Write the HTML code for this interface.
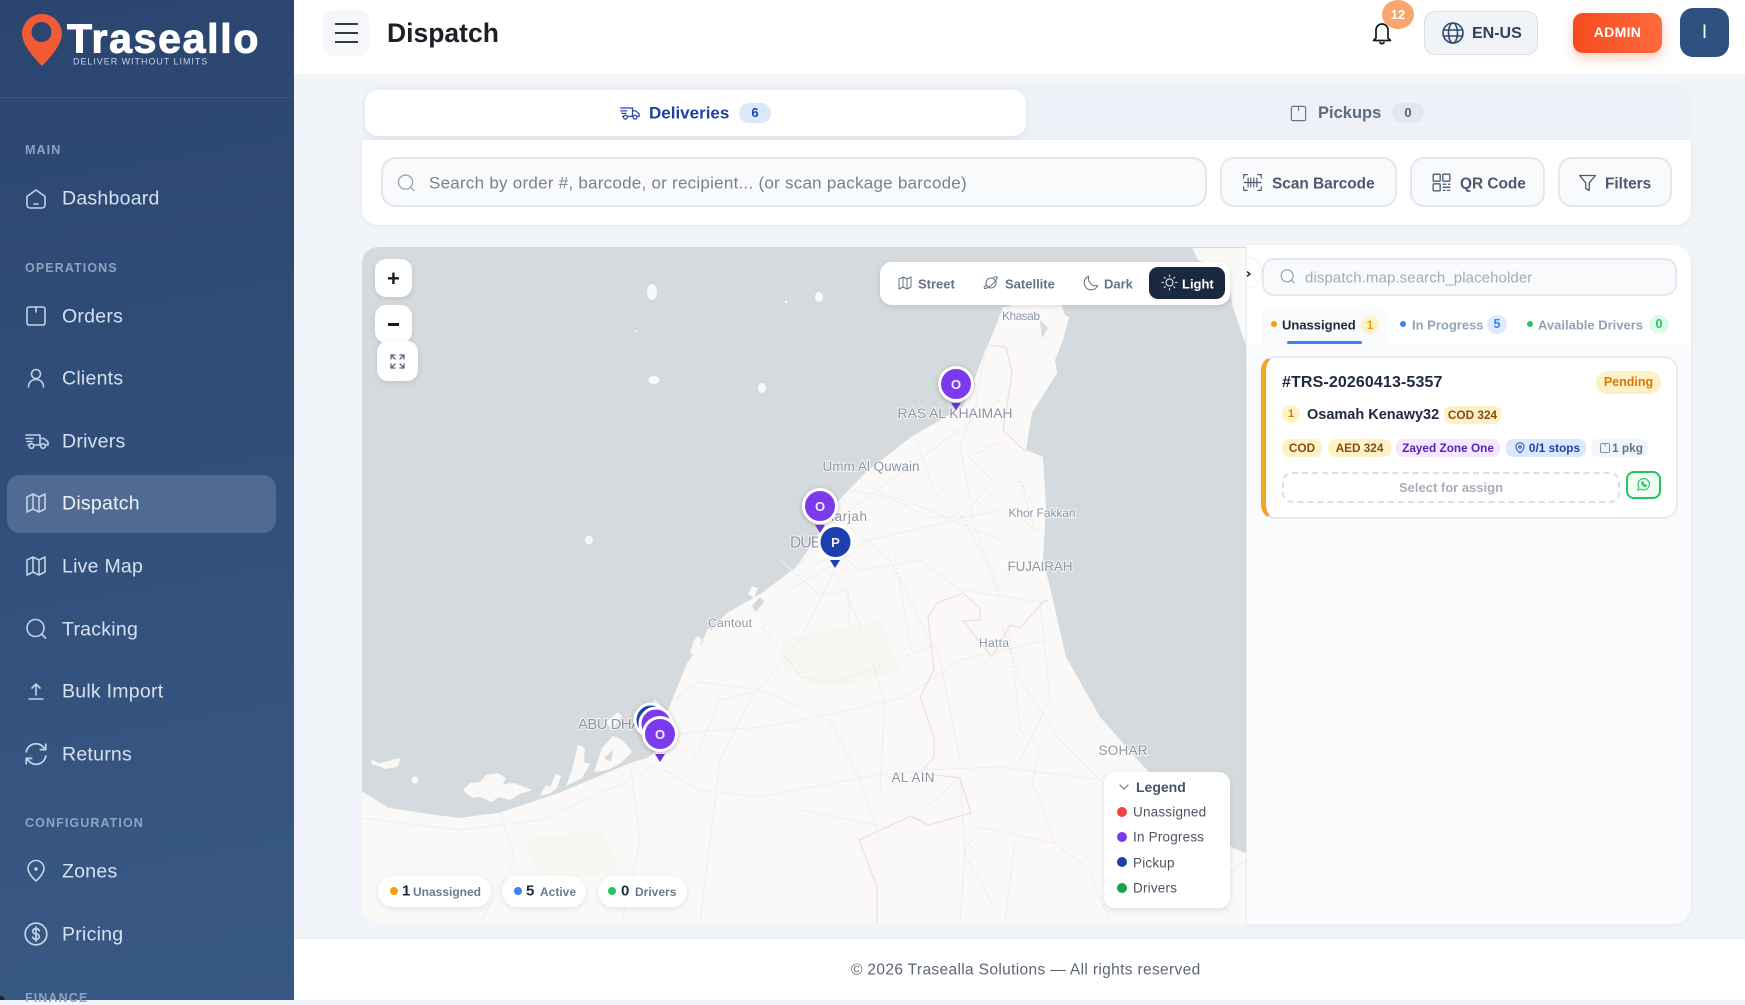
<!DOCTYPE html>
<html lang="en"><head><meta charset="utf-8"><title>Dispatch</title>
<style>
*{box-sizing:border-box}
html,body{margin:0;padding:0;width:1745px;height:1000px;overflow:hidden;background:#f1f4f9;font-family:"Liberation Sans",sans-serif}
.a{position:absolute;white-space:nowrap;line-height:1;transform:translateY(-50%)}
.b{position:absolute}
svg.i{position:absolute;fill:none;stroke:currentColor;stroke-width:1.6;stroke-linecap:round;stroke-linejoin:round}
.s{left:62px;font-size:19.5px;color:#d6e0ee;letter-spacing:.25px}
.h{left:25px;font-size:12.5px;font-weight:700;color:#8fa3c1;letter-spacing:1.1px}
.si{color:#c3d1e5;width:24px;height:24px;left:24px}
.btn{position:absolute;background:#f8fafc;border:2px solid #e2e8f0;border-radius:14px;top:157px;height:50px}
.bt{font-size:15.4px;font-weight:700;color:#4b5a6e;top:184px}
.pill{position:absolute;border-radius:7px;height:18px;top:439px;font-size:11.8px;font-weight:700;line-height:18px;text-align:center}
.mc{position:absolute;background:#fff;border-radius:11px;box-shadow:0 2px 6px rgba(30,41,59,.12)}
.st{position:absolute;background:#fff;border-radius:16px;top:876px;height:31px;box-shadow:0 2px 6px rgba(30,41,59,.1)}
.lt{font-size:13px;font-weight:700;color:#64748b;top:284px}
.lg{left:1134px;font-size:13.5px;color:#4b5563;letter-spacing:.2px}
.ld{position:absolute;left:1117px;width:10px;height:10px;border-radius:50%}
</style></head><body>

<!-- sidebar -->
<div class="b" style="left:0;top:0;width:294px;height:1000px;background:linear-gradient(170deg,#2a4570,#395985)"></div>
<div class="b" style="left:0;top:97px;width:294px;height:1px;background:#3a5580"></div>
<svg class="b" style="left:0;top:0" width="80" height="80"><path fill-rule="evenodd" fill="#f05a35" d="M42 14C31 14 22 23 22 34C22 47 42 66 42 66C42 66 62 47 62 34C62 23 53 14 42 14ZM41.500 22a10 10 0 1 1 0 20a10 10 0 1 1 0-20Z"/></svg>
<div class="a" style="left:67px;top:39px;font-size:41px;font-weight:700;color:#fff;letter-spacing:1.7px;-webkit-text-stroke:1px #fff">Traseallo</div>
<div class="a" style="left:73px;top:62px;font-size:9px;color:#c4d2e6;letter-spacing:.95px">DELIVER WITHOUT LIMITS</div>

<div class="a h" style="top:150px">MAIN</div>
<div class="a h" style="top:268px">OPERATIONS</div>
<div class="a h" style="top:823px">CONFIGURATION</div>
<div class="a h" style="top:998px">FINANCE</div>
<div class="b" style="left:7px;top:475px;width:269px;height:58px;border-radius:13px;background:#4f6b92"></div>

<div class="a s" style="top:199px">Dashboard</div>
<div class="a s" style="top:317px">Orders</div>
<div class="a s" style="top:379px">Clients</div>
<div class="a s" style="top:442px">Drivers</div>
<div class="a s" style="top:504px;color:#eef3fa">Dispatch</div>
<div class="a s" style="top:567px">Live Map</div>
<div class="a s" style="top:630px">Tracking</div>
<div class="a s" style="top:692px">Bulk Import</div>
<div class="a s" style="top:755px">Returns</div>
<div class="a s" style="top:872px">Zones</div>
<div class="a s" style="top:935px">Pricing</div>

<svg class="i si" style="top:187px" viewBox="0 0 24 24"><path d="M3 9.500L12 3l9 6.500V18a3 3 0 0 1-3 3H6a3 3 0 0 1-3-3zM10 17h4"/></svg>
<svg class="i si" style="top:304px" viewBox="0 0 24 24"><rect x="3" y="3" width="18" height="18" rx="2"/><path d="M12 3v5"/></svg>
<svg class="i si" style="top:366px" viewBox="0 0 24 24"><circle cx="12" cy="8" r="4.500"/><path d="M4.500 21c0-4.500 3-7.500 7.500-7.500s7.500 3 7.500 7.500"/></svg>
<svg class="i si" style="top:429px;left:25px" viewBox="0 0 24 24"><path d="M1 6h14v10H9M15 9.500h4l4 3.500v3h-2M1 9.500h7M2 12.500h5M3 16h1M13 16h2"/><circle cx="6.500" cy="17" r="2.300"/><circle cx="18" cy="17" r="2.300"/></svg>
<svg class="i si" style="top:491px" viewBox="0 0 24 24"><path d="M3 6l6-3 6 3 6-3v15l-6 3-6-3-6 3zM9 3v15M15 6v15"/></svg>
<svg class="i si" style="top:554px" viewBox="0 0 24 24"><path d="M3 6l6-3 6 3 6-3v15l-6 3-6-3-6 3zM9 3v15M15 6v15"/></svg>
<svg class="i si" style="top:617px" viewBox="0 0 24 24"><circle cx="11.500" cy="11" r="8.500"/><path d="M18 17.500l3.500 3.500"/></svg>
<svg class="i si" style="top:679px" viewBox="0 0 24 24"><path d="M12 16V5M8 9l4-4 4 4M5 20h14"/></svg>
<svg class="i si" style="top:741px;left:23px;width:26px;height:26px" viewBox="0 0 24 24"><path d="M3 10a9 9 0 0 1 16-4l2 2M21 3v5h-5M21 14a9 9 0 0 1-16 4l-2-2M3 21v-5h5"/></svg>
<svg class="i si" style="top:859px" viewBox="0 0 24 24"><path d="M12 22s-8-7-8-12.500a8 8 0 0 1 16 0C20 15 12 22 12 22z"/><circle cx="12" cy="10" r="1" fill="currentColor"/></svg>
<svg class="i si" style="top:921px;left:23px;width:26px;height:26px" viewBox="0 0 24 24"><circle cx="12" cy="12" r="10"/><path d="M15 9c-.5-1.200-1.600-2-3-2-1.700 0-3 1-3 2.500S10.300 12 12 12s3 1 3 2.500-1.300 2.500-3 2.500c-1.400 0-2.500-.8-3-2M12 5.500v13"/></svg>
<div class="b" style="left:0;top:996px;width:10px;height:4px;background:radial-gradient(circle at 0 100%,#222 0 4px,transparent 5px)"></div>

<!-- header -->
<div class="b" style="left:294px;top:0;width:1451px;height:74px;background:#fff"></div>
<div class="b" style="left:323px;top:10px;width:46px;height:46px;border-radius:11px;background:#f5f7fa"></div>
<div class="b" style="left:335px;top:23px;width:23px;height:2px;background:#333a45"></div>
<div class="b" style="left:335px;top:32px;width:23px;height:2px;background:#333a45"></div>
<div class="b" style="left:335px;top:41px;width:23px;height:2px;background:#333a45"></div>
<div class="a" style="left:387px;top:33px;font-size:26.500px;font-weight:700;color:#1c1f26">Dispatch</div>
<svg class="i" style="left:1370px;top:20px;color:#15181e;stroke-width:1.7" width="24" height="26" viewBox="0 0 24 26"><path d="M6 18V10a6 6 0 0 1 12 0v8l2.500 2.500h-17zM10 22.500c.5 1.500 3.500 1.500 4 0"/></svg>
<div class="b" style="left:1382px;top:0;width:32px;height:29px;border-radius:50%;background:#f9a56f;color:#fff;font-size:13px;font-weight:700;text-align:center;line-height:29px">12</div>
<div class="b" style="left:1424px;top:11px;width:114px;height:44px;border-radius:11px;background:#f0f3f7;border:1.500px solid #d9dfe7"></div>
<svg class="i" style="left:1441px;top:21px;color:#2f4a6d" width="24" height="24" viewBox="0 0 24 24"><circle cx="12" cy="12" r="10"/><ellipse cx="12" cy="12" rx="4.500" ry="10"/><path d="M2.500 9h19M2.500 15h19"/></svg>
<div class="a" style="left:1472px;top:33.500px;font-size:16px;font-weight:700;color:#2f4058">EN-US</div>
<div class="b" style="left:1573px;top:13px;width:89px;height:40px;border-radius:10px;background:linear-gradient(90deg,#f54a1e,#ff6a3e);box-shadow:0 5px 12px rgba(245,85,40,.3);color:#fff;font-size:14px;font-weight:700;text-align:center;line-height:38px;letter-spacing:.3px">ADMIN</div>
<div class="b" style="left:1680px;top:8px;width:49px;height:49px;border-radius:13px;background:#2f5180;color:#fff;font-size:19px;text-align:center;line-height:49px">I</div>

<!-- tabs -->
<div class="b" style="left:362px;top:85px;width:1329px;height:60px;background:#eef1f8;border-radius:16px 16px 0 0"></div>
<div class="b" style="left:365px;top:90px;width:661px;height:46px;background:#fff;border-radius:13px;box-shadow:0 2px 6px rgba(30,41,59,.08)"></div>
<svg class="i" style="left:620px;top:103px;color:#2747a8;stroke-width:1.500" width="20" height="20" viewBox="0 0 24 24"><path d="M1 6h14v10H9M15 9.500h4l4 3.500v3h-2M1 9.500h7M2 12.500h5M3 16h1M13 16h2"/><circle cx="6.500" cy="17" r="2.300"/><circle cx="18" cy="17" r="2.300"/></svg>
<div class="a" style="left:649px;top:113px;font-size:17px;font-weight:700;color:#1f3fa3">Deliveries</div>
<div class="b" style="left:739px;top:103px;width:32px;height:20px;border-radius:10px;background:#dbe8fb;color:#1e40af;font-size:13px;font-weight:700;text-align:center;line-height:20px">6</div>
<svg class="i" style="left:1289px;top:104px;color:#64748b;stroke-width:1.500" width="19" height="19" viewBox="0 0 24 24"><rect x="3" y="3" width="18" height="18" rx="2"/><path d="M12 3v5"/></svg>
<div class="a" style="left:1318px;top:113px;font-size:16.500px;font-weight:700;color:#5d6b80">Pickups</div>
<div class="b" style="left:1392px;top:103px;width:32px;height:20px;border-radius:10px;background:#e2e8f0;color:#55647a;font-size:13px;font-weight:700;text-align:center;line-height:20px">0</div>

<!-- search card -->
<div class="b" style="left:362px;top:140px;width:1329px;height:85px;background:#fff;border-radius:0 0 15px 15px;box-shadow:0 1px 4px rgba(30,41,59,.07)"></div>
<div class="b" style="left:381px;top:157px;width:826px;height:50px;background:#f8fafc;border:2px solid #e1e7ef;border-radius:15px"></div>
<svg class="i" style="left:396px;top:173px;color:#9aa6b5" width="20" height="20" viewBox="0 0 24 24"><circle cx="11.500" cy="11" r="8.500"/><path d="M18 17.500l3.500 3.500"/></svg>
<div class="a" style="left:429px;top:183px;font-size:17px;color:#7a818b;letter-spacing:.25px">Search by order #, barcode, or recipient... (or scan package barcode)</div>

<div class="btn" style="left:1220px;width:177px"></div>
<svg class="i" style="left:1242px;top:172px;color:#4b5a6e;stroke-width:1.500" width="21" height="21" viewBox="0 0 24 24"><path d="M2 7V3h4M18 3h4v4M2 17v4h4M22 17v4h-4M7 7v10M10 7v10M13.500 7v10M17 7v10M2.500 12h19" stroke-width="1.300"/></svg>
<div class="a bt" style="left:1272px">Scan Barcode</div>
<div class="btn" style="left:1410px;width:135px"></div>
<svg class="i" style="left:1431px;top:172px;color:#4b5a6e;stroke-width:1.500" width="21" height="21" viewBox="0 0 24 24"><rect x="2.500" y="2.500" width="8" height="8" rx="1"/><rect x="13.500" y="2.500" width="8" height="8" rx="1"/><rect x="2.500" y="13.500" width="8" height="8" rx="1"/><path d="M14 14h3M20 14h1.500M14 17.500h7.500M14 21h2M19 21h2.500"/></svg>
<div class="a bt" style="left:1460px">QR Code</div>
<div class="btn" style="left:1558px;width:114px"></div>
<svg class="i" style="left:1577px;top:172px;color:#4b5a6e;stroke-width:1.500" width="21" height="21" viewBox="0 0 24 24"><path d="M3 4h18l-7 8.500V21l-4-2v-6.500z"/></svg>
<div class="a bt" style="left:1605px">Filters</div>

<!-- map -->
<div class="b" style="left:362px;top:247px;width:884px;height:676px;border-radius:16px 0 0 16px;overflow:hidden;background:#d4dadd">
<svg width="884" height="676" viewBox="362 247 884 676" style="display:block">
<path fill="#faf9f8" d="M362 792L363 792L389 808L423 813L458 818L498 813L532 802L561 792L590 780L630 763L647 758L658 750L664 723L672 700L679 683L687 663L699 647L713 628L727 613L762 593L796 567L808 550L819 533L836 503L865 473L911 437L963 407L986 350L997 323L1003 307L1037 303L1069 317L1063 340L1055 360L1057 373L1032 413L1026 450L1043 457L1046 507L1043 560L1049 583L1066 657L1100 717L1135 757L1175 800L1221 843L1246 853L1246 923L362 923Z"/>
<path fill="#faf9f8" d="M1192 248L1198 260L1227 270L1233 307L1244 340L1246 345L1246 248Z"/>
<g fill="#faf9f8"><ellipse cx="652" cy="292" rx="5" ry="8"/><ellipse cx="819" cy="297" rx="4" ry="5"/><ellipse cx="654" cy="380" rx="5.500" ry="4"/><ellipse cx="762" cy="388" rx="4" ry="5"/><ellipse cx="589" cy="540" rx="4" ry="4.500"/><circle cx="786" cy="302" r="1.300"/><circle cx="636" cy="331" r="1"/>
<path d="M463 790L470 783L480 782L486 775L498 773L506 778L503 784L514 783L532 790L520 794L510 800L498 797L492 802L480 797L472 798Z"/><path d="M371 760L380 763L385 762L400 758L399 764L397 767L385 769L381 767L372 764Z"/><circle cx="415" cy="780" r="3.500"/><path d="M540 795L546 785L550 787L556 774L561 776L557 788L549 794Z"/><path d="M566 786L572 770L578 745L585 748L584 762L590 764L582 778Z"/><path d="M594 772L602 748L613 736L622 740L626 744L632 752L622 762L608 770Z"/><path d="M606 722L618 712L622 716L612 730Z"/><path d="M642 712L655 700L660 704L650 718Z"/><path d="M690 654L694 640L698 636L702 640L697 654Z"/><path d="M703 640L708 628L712 630L708 644Z"/><path d="M748 594L752 586L758 588L754 598Z"/><path d="M1010 305L1060 300L1066 318L1050 330L1014 318Z"/></g>
<g fill="#d4dadd"><path d="M604 758L613 750L611 762Z"/><path d="M1040 320L1048 328L1042 338Z"/><path d="M752 606L760 597L764 602L756 612Z"/><path d="M646 752L654 735L657 748Z"/></g>
<path fill="#f6f6f3" d="M780 640L880 620L900 670L830 690L785 670Z M525 840L600 830L620 870L540 885Z"/>
<g fill="none" stroke="#f0efed" stroke-width="1.100">
<path d="M658 763L682 733L762 727L819 717L905 697L960 660L1046 640"/>
<path d="M664 770L700 790L760 797L860 778L920 770L1000 767L1100 780"/>
<path d="M672 700L700 682L760 690L830 720L860 780L880 840"/>
<path d="M694 760L720 700L760 690"/>
<path d="M630 763L640 840L622 923M500 813L515 860L480 923"/>
<path d="M362 818L460 830L540 820L630 780L658 763"/>
<path d="M835 570L800 640L750 700L720 760L700 923"/>
<path d="M835 570L860 625L885 700L880 790M840 520L890 560L940 660L960 760"/>
<path d="M820 540L860 570L920 560L960 590L1040 602M850 490L905 500L1000 540"/>
<path d="M796 567L850 510L905 470L1000 400M815 565L870 540L1000 510"/>
<path d="M1000 620L1020 680L1060 740L1100 780L1180 860L1240 923"/>
<path d="M1040 600L1050 700L1020 760"/>
<path d="M960 778L965 850L960 923M1015 840L1005 923M800 810L900 830L960 778"/>
<path d="M985 350L975 410L960 445L975 530L1000 590"/>
<path d="M780 560L820 595L848 590L850 630M790 590L850 555"/>
</g>
<g fill="none" stroke="#eedfdd" stroke-width="1.300">
<path d="M963 593L937 603L928 617L934 670L920 697L934 737L934 757L920 773L960 778L971 813L928 825L911 816L859 840L877 887L877 923"/>
<path d="M963 593L980 608L980 620L963 621L992 657L1010 625L1020 628L1043 602L1048 600"/>
<path d="M989 345L1006 347L1012 373L1003 430L1026 452"/>
</g>
<g fill="none" stroke="#efe3e1" stroke-width="1.200" stroke-dasharray="2 2.500">
<path d="M917 440L934 493L963 517L928 517L894 500L860 480"/>
<path d="M1003 440L969 457L992 480L963 517L985 560L1000 600"/>
<path d="M762 627L801 677L833 683L877 667L934 645"/>
<path d="M894 550L911 650"/>
<path d="M1009 630L1016 690L1020 730L1040 747L1032 783L1055 843L980 827L963 853L992 903"/>
<path d="M1055 843L1090 870L1110 923M1180 910L1246 860"/>
<path d="M1010 510L1035 530L1020 480L1035 510"/>
</g>
<g font-family="'Liberation Sans',sans-serif" fill="#8b95a3" stroke="#fff" stroke-width="2" paint-order="stroke" stroke-opacity=".75" text-anchor="middle" lengthAdjust="spacingAndGlyphs">
<text x="955" y="418" font-size="14" textLength="115">RAS AL KHAIMAH</text>
<text x="1021" y="320" font-size="12" textLength="38">Khasab</text>
<text x="871" y="471" font-size="13.500" textLength="97">Umm Al Quwain</text>
<text x="842" y="521" font-size="13.500" textLength="50">Sharjah</text>
<text x="812" y="547.500" font-size="15.500" textLength="44">DUBAI</text>
<text x="1042" y="517" font-size="12" textLength="67">Khor Fakkan</text>
<text x="1040" y="571" font-size="13.500" textLength="65">FUJAIRAH</text>
<text x="730" y="627" font-size="12" textLength="44">Cantout</text>
<text x="994" y="647" font-size="12" textLength="30">Hatta</text>
<text x="616" y="729" font-size="15" textLength="76">ABU DHABI</text>
<text x="1123" y="755" font-size="13.500" textLength="49">SOHAR</text>
<text x="913" y="782" font-size="13.500" textLength="43">AL AIN</text>
</g>
<!-- markers -->
<g stroke="#fff" stroke-width="3" style="filter:drop-shadow(0 1px 2px rgba(0,0,0,.25))">
<circle cx="651" cy="720" r="16" fill="#1e40af"/>
<circle cx="656" cy="724" r="16" fill="#7c3aed"/>
<circle cx="660" cy="734" r="16.500" fill="#7c3aed"/>
<circle cx="820" cy="506" r="16.500" fill="#7c3aed"/>
<circle cx="956" cy="384" r="16.500" fill="#7c3aed"/>
</g>
<path fill="#6d30d6" d="M655 754h10l-5 8zM815 525h10l-5 8zM951 403h10l-5 7z"/>
<path fill="#1e40af" d="M830 560h10l-5 8z"/>
<circle cx="835.500" cy="542" r="16.500" fill="#1e40af" stroke="#fff" stroke-width="3"/>
<g font-family="'Liberation Sans',sans-serif" font-size="13" font-weight="700" fill="#f3ecff" text-anchor="middle">
<text x="660" y="739">O</text><text x="820" y="511">O</text><text x="956" y="389">O</text><text x="835.500" y="547">P</text>
</g>
</svg>
</div>

<!-- map controls -->
<div class="mc" style="left:375px;top:259px;width:37px;height:38px"></div>
<div class="a" style="left:387px;top:279px;font-size:22px;font-weight:700;color:#1a1d23">+</div>
<div class="mc" style="left:375px;top:305px;width:37px;height:38px"></div>
<div class="b" style="left:388px;top:323px;width:11px;height:2.500px;background:#1a1d23"></div>
<div class="mc" style="left:377px;top:341px;width:41px;height:40px"></div>
<svg class="i" style="left:390px;top:354px;color:#596578;stroke-width:1.300" width="15" height="15" viewBox="0 0 15 15"><path d="M1 5V1h4M1 1l4 4M14 5V1h-4M14 1l-4 4M1 10v4h4M1 14l4-4M14 10v4h-4M14 14l-4-4"/></svg>

<!-- style toolbar -->
<div class="mc" style="left:880px;top:262px;width:350px;height:43px;border-radius:12px"></div>
<div class="b" style="left:1149px;top:267px;width:76px;height:32px;border-radius:9px;background:#1a2840"></div>
<svg class="i" style="left:897px;top:275px;color:#64748b;stroke-width:1.500" width="16" height="16" viewBox="0 0 24 24"><path d="M3 6l6-3 6 3 6-3v15l-6 3-6-3-6 3zM9 3v15M15 6v15"/></svg>
<div class="a lt" style="left:918px">Street</div>
<svg class="i" style="left:983px;top:275px;color:#64748b;stroke-width:1.500" width="16" height="16" viewBox="0 0 24 24"><circle cx="12" cy="12" r="7.500"/><path d="M5 15c-3 2.500-4 4-3 5 1.500 1.200 7-1.500 12-6s8-9 7-11c-.7-1-2.500-.5-5 1"/></svg>
<div class="a lt" style="left:1005px">Satellite</div>
<svg class="i" style="left:1083px;top:274px;color:#64748b;stroke-width:1.500" width="17" height="17" viewBox="0 0 24 24"><path d="M21 16A10 10 0 1 1 8 3a10 11 0 0 0 13 13z"/></svg>
<div class="a lt" style="left:1104px">Dark</div>
<svg class="i" style="left:1161px;top:274px;color:#e8edf5;stroke-width:1.500" width="17" height="17" viewBox="0 0 24 24"><circle cx="12" cy="12" r="5"/><path d="M12 1.500v2M12 20.500v2M1.500 12h2M20.500 12h2M4.600 4.600l1.400 1.400M18 18l1.400 1.400M19.400 4.600L18 6M6 18l-1.400 1.400"/></svg>
<div class="a lt" style="left:1182px;color:#fff">Light</div>

<!-- stats -->
<div class="st" style="left:378px;width:113px"></div>
<div class="b" style="left:390px;top:887px;width:8px;height:8px;border-radius:50%;background:#f59e0b"></div>
<div class="a" style="left:402px;top:891px;font-size:15px;font-weight:700;color:#1e293b">1</div>
<div class="a" style="left:413px;top:892px;font-size:12px;color:#6b7a8f;font-weight:700">Unassigned</div>
<div class="st" style="left:502px;width:84px"></div>
<div class="b" style="left:514px;top:887px;width:8px;height:8px;border-radius:50%;background:#3b82f6"></div>
<div class="a" style="left:526px;top:891px;font-size:15px;font-weight:700;color:#1e293b">5</div>
<div class="a" style="left:540px;top:892px;font-size:12px;color:#6b7a8f;font-weight:700">Active</div>
<div class="st" style="left:598px;width:89px"></div>
<div class="b" style="left:608px;top:887px;width:8px;height:8px;border-radius:50%;background:#22c55e"></div>
<div class="a" style="left:621px;top:891px;font-size:15px;font-weight:700;color:#1e293b">0</div>
<div class="a" style="left:635px;top:892px;font-size:12px;color:#6b7a8f;font-weight:700">Drivers</div>

<!-- legend -->
<div class="mc" style="left:1104px;top:772px;width:126px;height:136px;border-radius:11px"></div>
<svg class="i" style="left:1119px;top:782px;color:#64748b;stroke-width:1.200" width="10" height="10" viewBox="0 0 10 10"><path d="M1 3l4 4 4-4"/></svg>
<div class="a" style="left:1136px;top:787px;font-size:14px;font-weight:700;color:#475569">Legend</div>
<div class="ld" style="top:807px;background:#ef4444"></div><div class="a lg" style="top:812px;left:1133px">Unassigned</div>
<div class="ld" style="top:832px;background:#7c3aed"></div><div class="a lg" style="top:837px;left:1133px">In Progress</div>
<div class="ld" style="top:857px;background:#1e40af"></div><div class="a lg" style="top:863px;left:1133px">Pickup</div>
<div class="ld" style="top:883px;background:#16a34a"></div><div class="a lg" style="top:888px;left:1133px">Drivers</div>

<!-- right panel -->
<div class="b" style="left:1247px;top:245px;width:444px;height:679px;background:#fff;border-radius:0 18px 18px 0;box-shadow:0 1px 4px rgba(30,41,59,.06)"></div>
<div class="b" style="left:1247px;top:344px;width:444px;height:580px;background:#fafbfd;border-radius:0 0 18px 0"></div>
<div class="b" style="left:1247px;top:257px;width:15px;height:32px;border-radius:0 16px 16px 0;background:#fff;border:1px solid #eef1f5;border-left:0"></div>
<svg class="i" style="left:1246px;top:271px;color:#1e293b;stroke-width:1.500" width="6" height="6" viewBox="0 0 6 6"><path d="M1.500 1l2.500 2-2.500 2"/></svg>
<div class="b" style="left:1262px;top:258px;width:415px;height:38px;background:#f8fafc;border:2px solid #e2e8f0;border-radius:12px"></div>
<svg class="i" style="left:1279px;top:268px;color:#8f9bab;stroke-width:1.600" width="17" height="17" viewBox="0 0 24 24"><circle cx="11.500" cy="11" r="8.500"/><path d="M18 17.500l3.500 3.500"/></svg>
<div class="a" style="left:1305px;top:278px;font-size:15px;color:#a2abb8;letter-spacing:.1px">dispatch.map.search_placeholder</div>

<div class="b" style="left:1262px;top:307px;width:126px;height:37px;background:#f8fafc;border-radius:8px 8px 0 0"></div>
<div class="b" style="left:1271px;top:321px;width:6px;height:6px;border-radius:50%;background:#f59e0b"></div>
<div class="a" style="left:1282px;top:325px;font-size:13px;font-weight:700;color:#1e293b">Unassigned</div>
<div class="b" style="left:1361px;top:316px;width:18px;height:18px;border-radius:50%;background:#fef3c7;color:#f59e0b;font-size:12px;font-weight:700;text-align:center;line-height:18px">1</div>
<div class="b" style="left:1287px;top:341px;width:75px;height:2.500px;border-radius:2px;background:#3b82f6"></div>
<div class="b" style="left:1400px;top:321px;width:6px;height:6px;border-radius:50%;background:#3b82f6"></div>
<div class="a" style="left:1412px;top:325px;font-size:13px;font-weight:700;color:#94a3b8">In Progress</div>
<div class="b" style="left:1487px;top:315px;width:20px;height:19px;border-radius:50%;background:#dfeafd;color:#3b82f6;font-size:12.500px;font-weight:700;text-align:center;line-height:19px">5</div>
<div class="b" style="left:1527px;top:321px;width:6px;height:6px;border-radius:50%;background:#22c55e"></div>
<div class="a" style="left:1538px;top:325px;font-size:13px;font-weight:700;color:#94a3b8">Available Drivers</div>
<div class="b" style="left:1649px;top:315px;width:20px;height:19px;border-radius:50%;background:#dcfce7;color:#22c55e;font-size:12.500px;font-weight:700;text-align:center;line-height:19px">0</div>

<!-- order card -->
<div class="b" style="left:1261px;top:356px;width:417px;height:163px;background:#fff;border:2px solid #e6ebf2;border-left:5px solid #f5a524;border-radius:14px"></div>
<div class="a" style="left:1282px;top:383px;font-size:16px;font-weight:700;color:#1e293b;letter-spacing:.12px">#TRS-20260413-5357</div>
<div class="b" style="left:1596px;top:371px;width:65px;height:23px;border-radius:12px;background:#fef0c7;color:#d97706;font-size:12.500px;font-weight:700;text-align:center;line-height:23px">Pending</div>
<div class="b" style="left:1282px;top:405px;width:18px;height:18px;border-radius:50%;background:#fef3c7;color:#d97706;font-size:11px;font-weight:700;text-align:center;line-height:18px">1</div>
<div class="a" style="left:1307px;top:415px;font-size:14.500px;font-weight:700;color:#1e293b">Osamah Kenawy32</div>
<div class="pill" style="left:1444px;top:406px;width:57px;background:#fef0c7;color:#854d0e">COD 324</div>
<div class="pill" style="left:1282px;width:40px;background:#fef3c7;color:#854d0e">COD</div>
<div class="pill" style="left:1328px;width:63px;background:#fef3c7;color:#854d0e">AED 324</div>
<div class="pill" style="left:1396px;width:104px;background:#f3e8ff;color:#5b21b6">Zayed Zone One</div>
<div class="pill" style="left:1506px;width:80px;background:#dbe7fb;color:#1e40af;padding-left:17px">0/1 stops</div>
<svg class="i" style="left:1514px;top:442px;color:#1e40af;stroke-width:1.800" width="12" height="12" viewBox="0 0 24 24"><path d="M12 22s-8-7-8-12.500a8 8 0 0 1 16 0C20 15 12 22 12 22z"/><circle cx="12" cy="10" r="2.500"/></svg>
<div class="pill" style="left:1591px;width:57px;background:#f1f5f9;color:#64748b;padding-left:16px">1 pkg</div>
<svg class="i" style="left:1599px;top:442px;color:#64748b;stroke-width:1.600" width="12" height="12" viewBox="0 0 24 24"><rect x="3" y="3" width="18" height="18" rx="3"/><path d="M12 3v5"/></svg>
<div class="b" style="left:1282px;top:472px;width:338px;height:31px;border:2px dashed #dcdfe5;border-radius:10px;color:#a8afba;font-size:13px;font-weight:700;text-align:center;line-height:27px">Select for assign</div>
<div class="b" style="left:1626px;top:471px;width:35px;height:28px;border:2px solid #22c55e;border-radius:8px;background:#f0fdf4"></div>
<svg class="i" style="left:1636px;top:477px;color:#22c55e;stroke-width:1.800" width="15" height="15" viewBox="0 0 24 24"><path d="M3 21l1.500-5A9 9 0 1 1 8 19.500z"/><path d="M9 8.500c0 4 3 6.500 6.500 7l1.500-2-2.500-1-1 1c-1-.5-2-1.500-2.500-2.500l1-1-1-2.500z"/></svg>

<!-- footer -->
<div class="b" style="left:294px;top:938px;width:1451px;height:62px;background:#fff;border-top:1px solid #e8ecf2"></div>
<div class="a" style="left:851px;top:970px;font-size:15.500px;color:#5c6573;letter-spacing:.35px">© 2026 Trasealla Solutions — All rights reserved</div>
</body></html>
